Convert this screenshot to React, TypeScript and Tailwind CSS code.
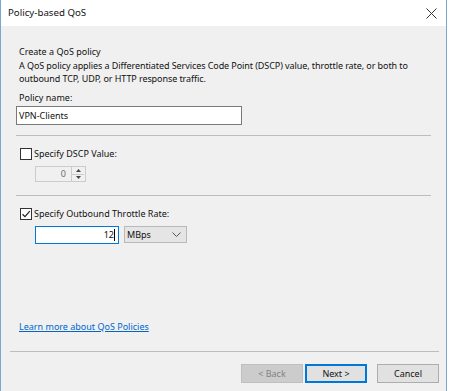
import React from "react";

const font = { fontFamily: '"Noto Sans", "Segoe UI", sans-serif' };

function CheckBox({ checked }: { checked?: boolean }) {
  return (
    <div className="w-[12px] h-[12px] border border-[#333] bg-white flex items-center justify-center">
      {checked && (
        <svg width="10" height="10" viewBox="0 0 10 10">
          <path d="M1.5 5.2 L4 7.6 L8.8 2.2" fill="none" stroke="#222" strokeWidth="1.2" />
        </svg>
      )}
    </div>
  );
}

function Separator({ className }: { className: string }) {
  return <div className={"h-px bg-[#bdbdbd] " + className} />;
}

export default function App() {
  return (
    <div className="w-[449px] h-[391px] bg-white text-[9px] text-[#111] whitespace-nowrap" style={font}>
      <div className="w-[447px] h-[391px] border-x border-[#7aa7cc] bg-[#f0f0f0] flex flex-col">
        {/* title bar */}
        <div className="h-[26px] bg-white flex items-center justify-between pl-[7px] pr-[9px]">
          <span className="text-[9.7px] leading-[14px]">Policy-based QoS</span>
          <svg width="11" height="11" viewBox="0 0 11 11">
            <path d="M0.5 0.5 L10.5 10.5 M10.5 0.5 L0.5 10.5" stroke="#333" strokeWidth="1" />
          </svg>
        </div>

        <div className="flex flex-col pl-[15px]">
          <div className="mt-[18px] pl-[3px] leading-[15px]">Create a QoS policy</div>
          <div className="pl-[3px] leading-[13px] tracking-[-0.08px]">
            A QoS policy applies a Differentiated Services Code Point (DSCP) value, throttle rate, or both to
            <br />
            outbound TCP, UDP, or HTTP response traffic.
          </div>
          <div className="mt-[5px] pl-[3px] leading-[15px]">Policy name:</div>
          <div className="mt-[1px] w-[226px] h-[19px] border border-[#7a7a7a] bg-white flex items-center pl-[2px] leading-[15px]">
            VPN-Clients
          </div>

          <Separator className="mt-[10px] w-[415px]" />

          <div className="mt-[10px] h-[15px] flex items-center gap-[2px] pl-[4px]">
            <CheckBox />
            <span className="leading-[15px]">Specify DSCP Value:</span>
          </div>
          <div className="mt-[5px] ml-[19px] w-[51px] h-[16px] border border-[#cccccc] bg-[#f0f0f0] flex items-center">
            <span className="flex-1 text-right pr-[5px] text-[#6d6d6d] leading-[14px]">0</span>
            <div className="w-[13px] h-[14px] flex flex-col border-l border-[#cccccc] mr-[1px]">
              <div className="flex-1 flex items-center justify-center border-b border-[#cccccc]">
                <svg width="5" height="3" viewBox="0 0 5 3">
                  <path d="M0 3 L2.5 0 L5 3 Z" fill="#444" />
                </svg>
              </div>
              <div className="flex-1 flex items-center justify-center">
                <svg width="5" height="3" viewBox="0 0 5 3">
                  <path d="M0 0 L2.5 3 L5 0 Z" fill="#444" />
                </svg>
              </div>
            </div>
          </div>

          <Separator className="mt-[13px] w-[415px]" />

          <div className="mt-[10px] h-[15px] flex items-center gap-[2px] pl-[4px]">
            <CheckBox checked />
            <span className="leading-[15px]">Specify Outbound Throttle Rate:</span>
          </div>
          <div className="mt-[5px] ml-[19px] flex gap-[5px]">
            <div className="w-[84px] h-[18px] border border-[#0078d7] bg-white flex items-center justify-end pr-[3px] leading-[14px]">
              12<span className="w-px h-[12px] bg-black" />
            </div>
            <div className="w-[63px] h-[17px] border border-[#b9b9b9] bg-[#e5e5e5] flex items-center justify-between pl-[2px] pr-[5px] leading-[14px]">
              <span>MBps</span>
              <svg width="9" height="5" viewBox="0 0 9 5">
                <path d="M0.5 0.5 L4.5 4.5 L8.5 0.5" fill="none" stroke="#555" strokeWidth="1" />
              </svg>
            </div>
          </div>

          <a className="mt-[75px] pl-[3px] leading-[15px] text-[#0066cc] underline w-fit" href="#">
            Learn more about QoS Policies
          </a>
        </div>

        <Separator className="mt-[17px] ml-[9px] w-[429px]" />

        <div className="mt-[12px] flex justify-end pr-[7px]">
          <div className="w-[62px] h-[19px] border border-[#bfbfbf] bg-[#cccccc] text-[#838383] flex items-center justify-center leading-[14px]">
            &lt; Back
          </div>
          <div className="ml-[2px] w-[62px] h-[19px] border-2 border-[#0078d7] bg-[#e1e1e1] flex items-center justify-center leading-[14px]">
            Next &gt;
          </div>
          <div className="ml-[10px] w-[62px] h-[19px] border border-[#adadad] bg-[#e1e1e1] flex items-center justify-center leading-[14px]">
            Cancel
          </div>
        </div>
      </div>
    </div>
  );
}
